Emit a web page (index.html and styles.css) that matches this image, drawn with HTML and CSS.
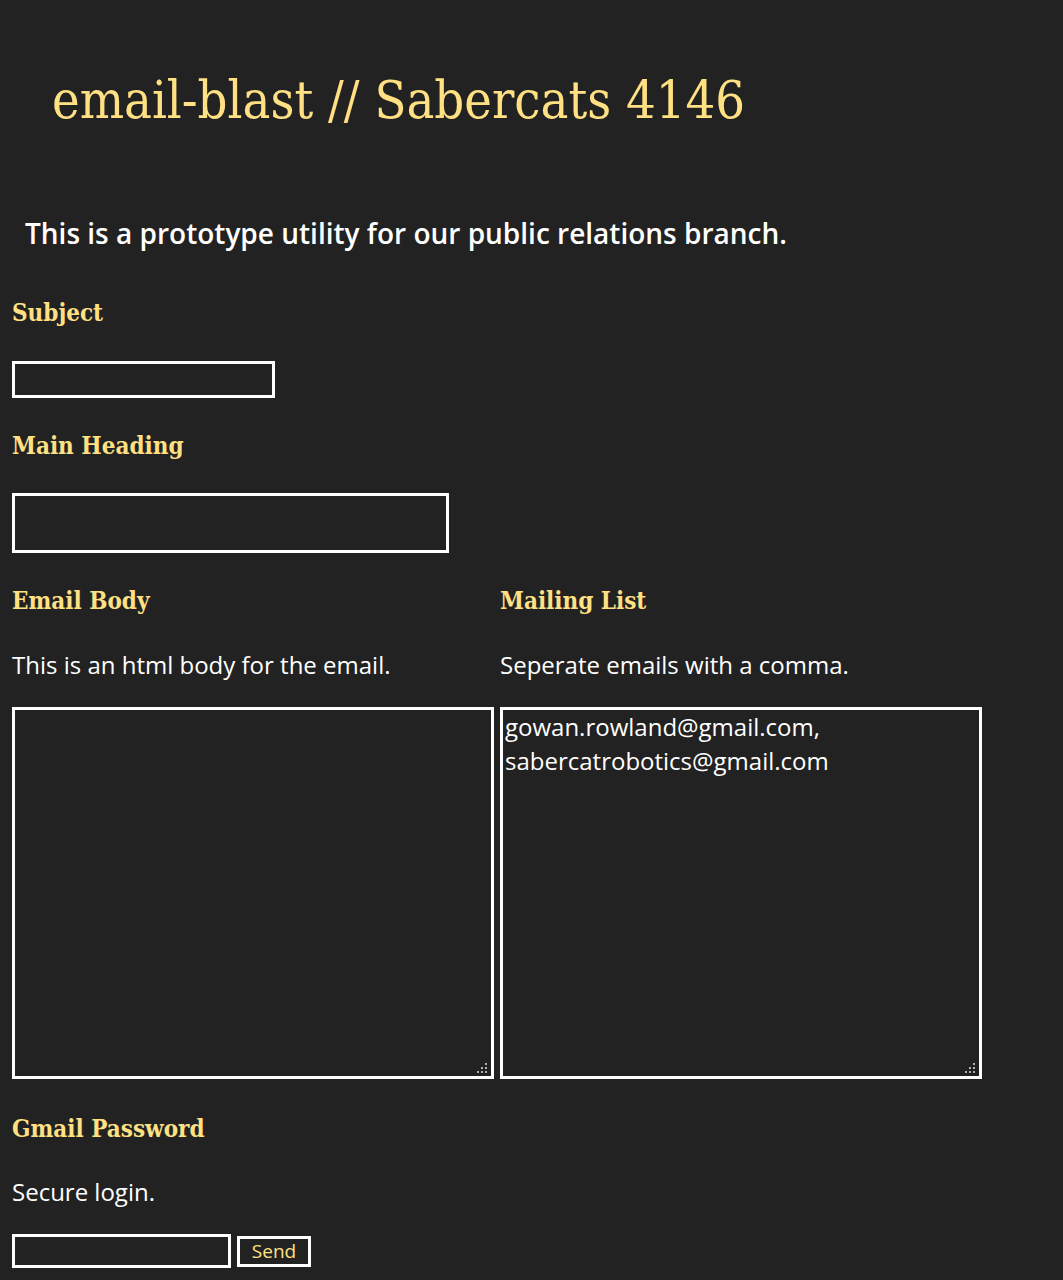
FILE: index.html
```html
<!DOCTYPE html>
<html>
<head>
<meta charset="utf-8">
<link rel="stylesheet" href="styles.css">
</head>
<body>
<header class="top">
  <h1 class="title">email-blast // Sabercats 4146</h1>
</header>
<p class="tagline">This is a prototype utility for our public relations branch.</p>
<form class="form">
  <h2 class="label label-first">Subject</h2>
  <input class="field field-subject" type="text">
  <h2 class="label">Main Heading</h2>
  <input class="field field-heading" type="text">
  <div class="columns">
    <div class="col">
      <h2 class="label">Email Body</h2>
      <p class="desc">This is an html body for the email.</p>
      <textarea class="area"></textarea>
    </div>
    <div class="col">
      <h2 class="label">Mailing List</h2>
      <p class="desc">Seperate emails with a comma.</p>
      <textarea class="area">gowan.rowland@gmail.com, sabercatrobotics@gmail.com</textarea>
    </div>
  </div>
  <h2 class="label label-pass">Gmail Password</h2>
  <p class="desc desc-pass">Secure login.</p>
  <div class="login">
    <input class="field field-pass" type="password">
    <button class="send" type="button">Send</button>
  </div>
</form>
</body>
</html>
```
FILE: styles.css
```css
html, body {
  background: #222222;
}
body {
  margin: 0;
  padding: 0 12px;
  color: #ffffff;
  font-family: "Open Sans", sans-serif;
}
.top {
  padding: 68px 0 0 40px;
}
.title {
  margin: 0;
  font-family: "DejaVu Serif", serif;
  font-stretch: condensed;
  font-weight: normal;
  font-size: 52px;
  line-height: 64px;
  color: #ffe082;
}
.tagline {
  margin: 81px 0 0 13px;
  font-size: 28px;
  font-weight: 600;
  line-height: 40px;
}
.form {
  display: flex;
  flex-direction: column;
  align-items: flex-start;
}
.label {
  margin: 33px 0 0 0;
  font-family: "DejaVu Serif", serif;
  font-stretch: condensed;
  font-weight: bold;
  font-size: 24px;
  line-height: 30px;
  color: #ffe082;
}
.label-first {
  margin-top: 45px;
}
.label-pass {
  margin-top: 35px;
}
.field {
  box-sizing: border-box;
  background: #222222;
  border: 3px solid #ffffff;
  color: #ffffff;
  font-family: "Open Sans", sans-serif;
  font-size: 20px;
  padding: 0 4px;
  outline: none;
}
.field-subject {
  margin-top: 33px;
  width: 263px;
  height: 37px;
}
.field-heading {
  margin-top: 32px;
  width: 437px;
  height: 60px;
}
.columns {
  display: flex;
  gap: 6px;
}
.col {
  display: flex;
  flex-direction: column;
  align-items: flex-start;
}
.desc {
  margin: 34px 0 0 0;
  font-size: 24px;
  line-height: 30px;
}
.desc-pass {
  margin-top: 33px;
}
.area {
  box-sizing: border-box;
  margin-top: 27px;
  width: 482px;
  height: 372px;
  background: #222222;
  border: 3px solid #ffffff;
  color: #ffffff;
  font-family: "Open Sans", sans-serif;
  font-size: 24px;
  line-height: 34px;
  padding: 0 2px;
  outline: none;
}
.area::-webkit-scrollbar {
  width: 15px;
  height: 15px;
}
.area::-webkit-resizer {
  background-color: transparent;
  background-image: url("data:image/svg+xml,%3Csvg xmlns='http://www.w3.org/2000/svg' width='15' height='15'%3E%3Cg fill='%23b0b0b0'%3E%3Crect x='9' y='2' width='2' height='2'/%3E%3Crect x='5' y='6' width='2' height='2'/%3E%3Crect x='9' y='6' width='2' height='2'/%3E%3Crect x='1' y='10' width='2' height='2'/%3E%3Crect x='5' y='10' width='2' height='2'/%3E%3Crect x='9' y='10' width='2' height='2'/%3E%3C/g%3E%3C/svg%3E");
  background-repeat: no-repeat;
}
.login {
  display: flex;
  align-items: center;
  gap: 6px;
  margin-top: 27px;
}
.field-pass {
  width: 219px;
  height: 34px;
}
.send {
  box-sizing: border-box;
  width: 74px;
  height: 31px;
  background: #222222;
  border: 3px solid #ffffff;
  color: #ffe082;
  font-family: "Open Sans", sans-serif;
  font-size: 19px;
  line-height: 24px;
  padding: 0;
}
```
